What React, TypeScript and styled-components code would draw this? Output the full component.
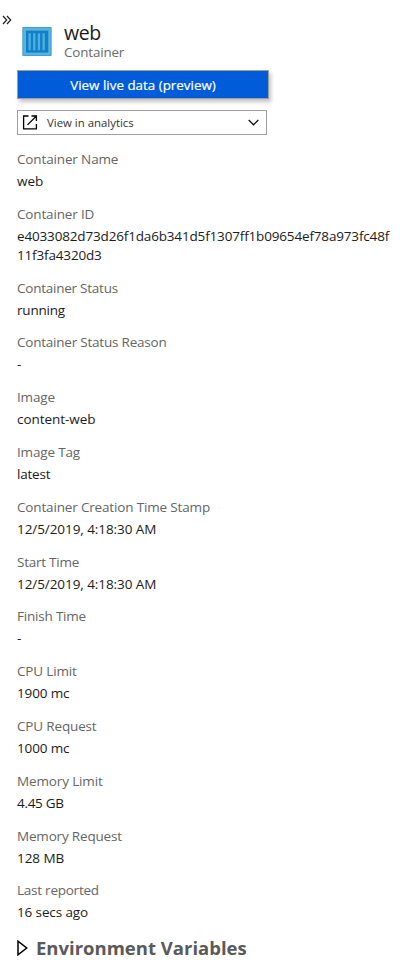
import React from "react";
import styled, { createGlobalStyle } from "styled-components";

const GlobalStyle = createGlobalStyle`
  html, body { margin: 0; background: #fff; }
  body { overflow: hidden; }
  * { box-sizing: border-box; }
`;

const Panel = styled.main`
  display: flex;
  flex-direction: column;
  width: 409px;
  height: 965px;
  padding: 15px 17px 0 2px;
  overflow: hidden;
  font-family: "Open Sans", "Noto Sans", sans-serif;
  color: #1b1b1b;
`;

const Header = styled.header`
  display: flex;
  align-items: flex-start;
  height: 55px;
`;

const CollapseButton = styled.button`
  display: flex;
  width: 10px;
  height: 10px;
  margin-right: 10px;
  padding: 0;
  border: 0;
  background: none;
`;

const ContainerIcon = styled.svg`
  width: 30px;
  height: 29px;
  margin: 12px 12px 0 0;
`;

const Heading = styled.div`
  display: flex;
  flex-direction: column;
  padding-top: 6px;
`;

const Title = styled.h1`
  margin: 0;
  font-size: 19.5px;
  font-weight: 400;
  line-height: 24px;
  letter-spacing: -0.4px;
`;

const Subtitle = styled.span`
  color: #6a6a6a;
  font-size: 13.4px;
  line-height: 15px;
  letter-spacing: -0.15px;
`;

const Body = styled.section`
  display: flex;
  flex-direction: column;
  align-items: flex-start;
  padding-left: 15px;
`;

const PrimaryButton = styled.button`
  width: 252px;
  height: 29px;
  padding: 0;
  border: 1px solid #a19f9d;
  background: #015cda;
  box-shadow: 2px 3px 4px rgba(0, 0, 0, 0.24);
  color: #fff;
  font: 400 13.4px "Open Sans", sans-serif;
  -webkit-text-stroke: 0.2px #fff;
`;

const AnalyticsSelect = styled.button`
  display: flex;
  align-items: center;
  width: 250px;
  height: 25px;
  margin-top: 11px;
  padding: 0 7px 0 4px;
  border: 1px solid #a0a0a0;
  background: #fff;
  color: #333;
  font: 400 11.4px "Open Sans", sans-serif;
`;

const SelectText = styled.span`
  flex: 1;
  padding-left: 9px;
  text-align: left;
`;

const Details = styled.dl`
  margin: 14.4px 0 0;
`;

const Field = styled.div`
  padding-bottom: 13.1px;
`;

const Label = styled.dt<{ $spacing: number }>`
  height: 23px;
  color: #666;
  font-size: 13.5px;
  line-height: 20px;
  letter-spacing: ${(p) => p.$spacing}px;
`;

const Value = styled.dd<{ $spacing: number }>`
  margin: 0;
  font-size: 13.5px;
  line-height: 18.7px;
  letter-spacing: ${(p) => p.$spacing}px;
  white-space: pre-line;
`;

const Disclosure = styled.button`
  display: flex;
  align-items: center;
  height: 28px;
  margin-top: -2px;
  padding: 0;
  border: 0;
  background: none;
  color: #5a5a5a;
  font: 700 18.5px "Open Sans", sans-serif;
`;

const DisclosureIcon = styled.svg`
  width: 11px;
  height: 16px;
  margin-top: 2px;
`;

const DisclosureText = styled.span`
  padding-left: 8px;
`;

type Detail = {
  label: string;
  value: string;
  labelSpacing?: number;
  valueSpacing?: number;
};

const details: Detail[] = [
  { label: "Container Name", value: "web", labelSpacing: -0.14 },
  {
    label: "Container ID",
    value: "e4033082d73d26f1da6b341d5f1307ff1b09654ef78a973fc48f\n11f3fa4320d3",
    valueSpacing: -0.16,
  },
  { label: "Container Status", value: "running", labelSpacing: -0.24, valueSpacing: -0.2 },
  { label: "Container Status Reason", value: "-", labelSpacing: -0.22 },
  { label: "Image", value: "content-web", valueSpacing: -0.05 },
  { label: "Image Tag", value: "latest", valueSpacing: -0.2 },
  { label: "Container Creation Time Stamp", value: "12/5/2019, 4:18:30 AM" },
  { label: "Start Time", value: "12/5/2019, 4:18:30 AM", labelSpacing: -0.24 },
  { label: "Finish Time", value: "-", labelSpacing: -0.2 },
  { label: "CPU Limit", value: "1900 mc", valueSpacing: -0.15 },
  { label: "CPU Request", value: "1000 mc", valueSpacing: -0.15 },
  { label: "Memory Limit", value: "4.45 GB", labelSpacing: -0.14, valueSpacing: -0.3 },
  { label: "Memory Request", value: "128 MB", labelSpacing: -0.18 },
  { label: "Last reported", value: "16 secs ago", labelSpacing: -0.24, valueSpacing: -0.12 },
];

export default function App() {
  return (
    <Panel>
      <GlobalStyle />
      <Header>
        <CollapseButton aria-label="Collapse">
          <svg width="10" height="10" viewBox="0 0 10 10" fill="none" stroke="#222" strokeWidth="1.2">
            <path d="M1 1 4.7 5 1 9M5 1 8.7 5 5 9" />
          </svg>
        </CollapseButton>
        <ContainerIcon viewBox="0 0 30 29">
          <rect x="0.3" width="29.4" height="29" rx="1" fill="#3f9fd6" />
          <rect x="1.3" y="1" width="27.4" height="27" fill="#59b4d9" />
          <rect x="4" y="3.6" width="22.3" height="22" fill="#0f80cc" />
          <path d="M6.5 6.2h2.3v17h-2.3zM11.1 6.2h2.3v17h-2.3zM15.8 6.2h2.3v17h-2.3zM20.5 6.2h2.3v17h-2.3z" fill="#50afdb" />
        </ContainerIcon>
        <Heading>
          <Title>web</Title>
          <Subtitle>Container</Subtitle>
        </Heading>
      </Header>
      <Body>
        <PrimaryButton>View live data (preview)</PrimaryButton>
        <AnalyticsSelect>
          <svg width="16" height="16" viewBox="0 0 16 16" fill="none" stroke="#000" strokeWidth="1.3">
            <path d="M6.5 1H1.6v12.8h12.8V9M9.5 1h4.9v4.9M14.2 1.2 5.5 9.9" />
          </svg>
          <SelectText>View in analytics</SelectText>
          <svg width="11" height="7" viewBox="0 0 11 7" fill="none" stroke="#111" strokeWidth="1.3">
            <path d="M.7 1 5.5 5.8 10.3 1" />
          </svg>
        </AnalyticsSelect>
        <Details>
          {details.map(({ label, value, labelSpacing = -0.16, valueSpacing = -0.07 }) => (
            <Field key={label}>
              <Label $spacing={labelSpacing}>{label}</Label>
              <Value $spacing={valueSpacing}>{value}</Value>
            </Field>
          ))}
        </Details>
        <Disclosure>
          <DisclosureIcon viewBox="0 0 11 16" fill="none" stroke="#000" strokeWidth="1.5">
            <path d="M1 1.2v13.6L9.7 8Z" />
          </DisclosureIcon>
          <DisclosureText>Environment Variables</DisclosureText>
        </Disclosure>
      </Body>
    </Panel>
  );
}
